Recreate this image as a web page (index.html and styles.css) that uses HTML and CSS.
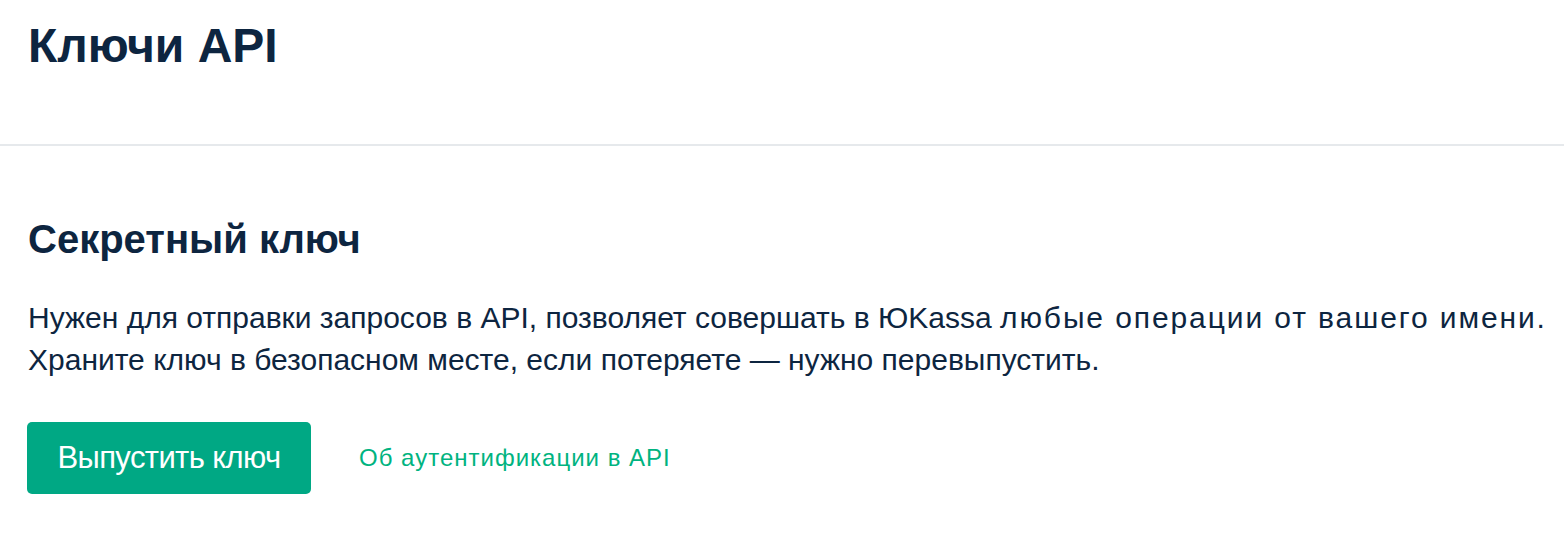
FILE: index.html
```html
<!DOCTYPE html>
<html lang="ru">
<head>
<meta charset="utf-8">
<link rel="stylesheet" href="styles.css">
<title>Ключи API</title>
</head>
<body>
<header class="page-header">
  <h1 class="page-title">Ключи API</h1>
</header>
<section class="section">
  <h2 class="section-title">Секретный ключ</h2>
  <p class="section-text">Нужен для отправки запросов в API, позволяет совершать в ЮKassa <span class="wide">любые операции от вашего имени.</span><br>Храните ключ в безопасном месте, если потеряете — нужно перевыпустить.</p>
  <div class="actions">
    <button class="btn-primary" type="button">Выпустить ключ</button>
    <a class="link" href="#">Об аутентификации в API</a>
  </div>
</section>
</body>
</html>
```
FILE: styles.css
```css
html, body {
  margin: 0;
  padding: 0;
  background: #ffffff;
}
body {
  font-family: "Liberation Sans", Arial, sans-serif;
  color: #0d2540;
}
.page-header {
  height: 146px;
  border-bottom: 2px solid #e6e9ec;
  padding: 0 28px;
  box-sizing: border-box;
}
.page-title {
  margin: 0;
  padding-top: 18px;
  font-size: 48px;
  line-height: 56px;
  font-weight: 700;
}
.section {
  padding: 0 28px;
}
.section-title {
  margin: 0;
  padding-top: 69px;
  font-size: 40px;
  line-height: 48px;
  font-weight: 700;
}
.section-text {
  margin: 34px 0 0;
  font-size: 30px;
  line-height: 42px;
  white-space: nowrap;
}
.section-text .wide {
  letter-spacing: 1.9px;
}
.actions {
  margin-top: 41px;
  margin-left: -1px;
  display: flex;
  align-items: center;
  gap: 48px;
}
.btn-primary {
  height: 72px;
  width: 284px;
  border: 0;
  border-radius: 5px;
  background: #00a884;
  color: #ffffff;
  font-family: "Liberation Sans", Arial, sans-serif;
  font-size: 31px;
  letter-spacing: -0.6px;
  padding: 0;
}
.link {
  color: #00b380;
  text-decoration: none;
  font-size: 24px;
  letter-spacing: 1px;
}
```
